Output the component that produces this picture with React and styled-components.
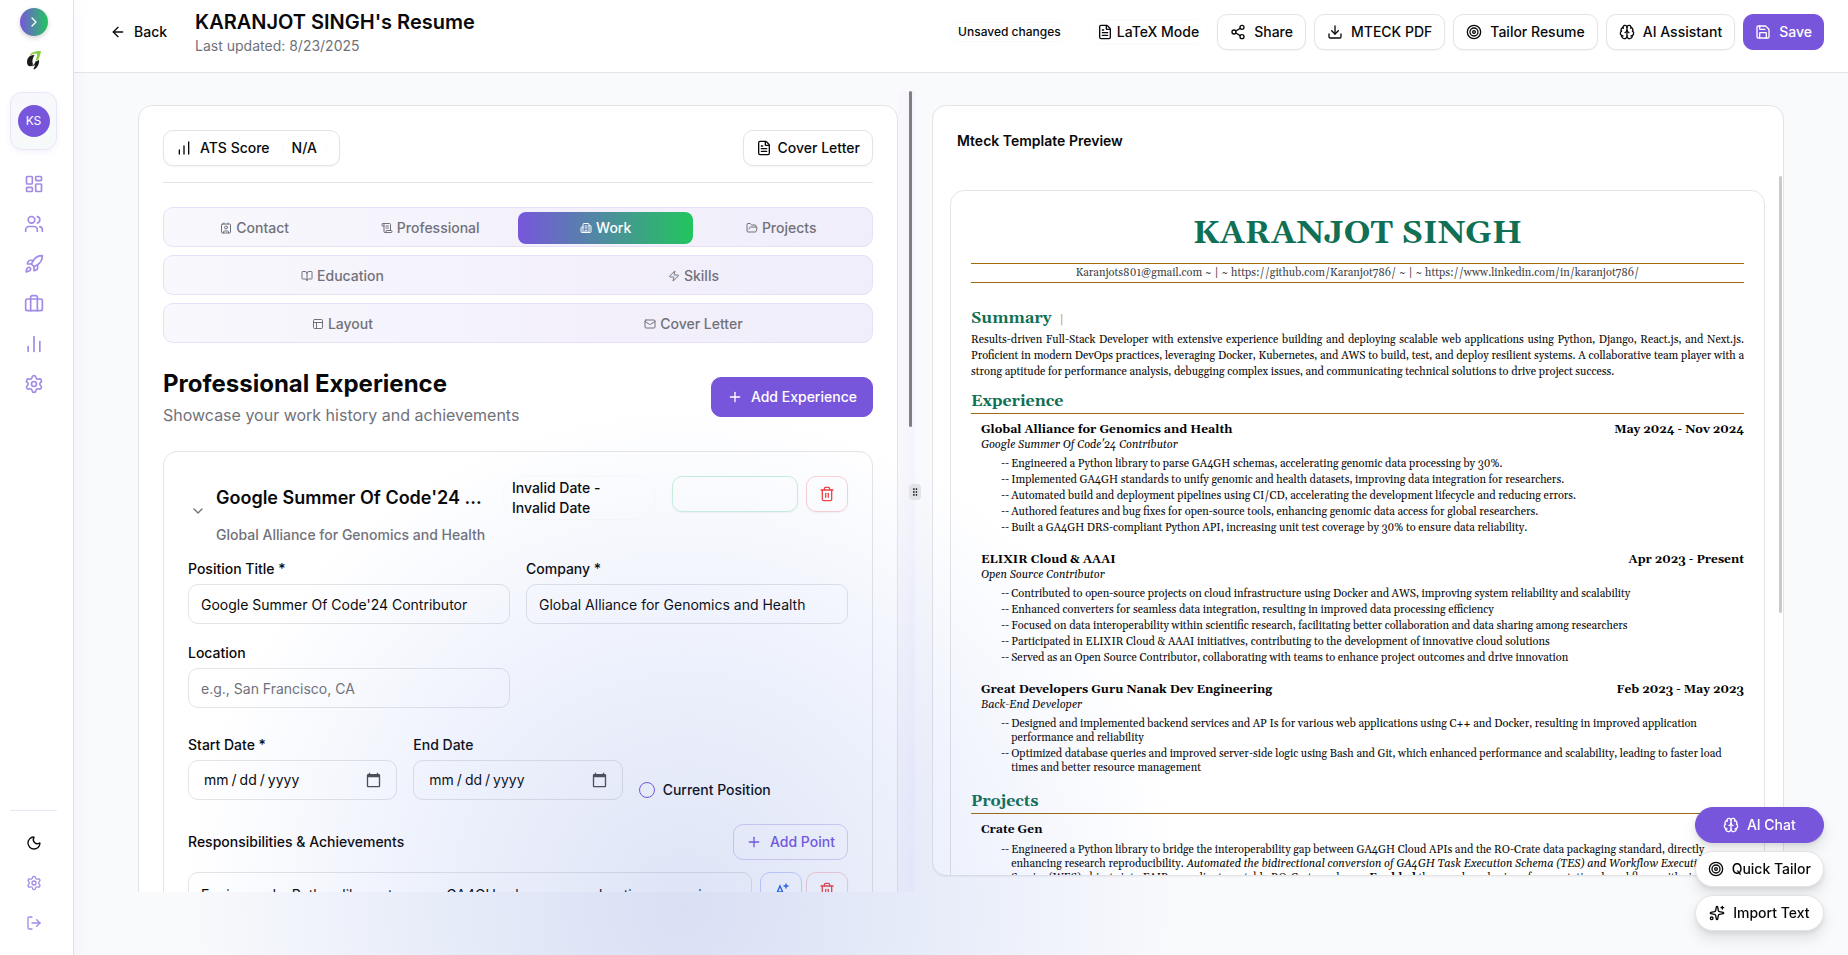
import React from "react";
import styled, { createGlobalStyle, css } from "styled-components";
import {
  ArrowLeft, BookOpen, Brain, Briefcase, Building2, ChartNoAxesColumn,
  ChartNoAxesColumnIncreasing, ChevronDown, ChevronRight, Contact, Download,
  FileText, FolderOpen, GripVertical, LayoutDashboard, LogOut, Mail, Moon,
  PanelsTopLeft, Plus, Rocket, Save, ScrollText, Settings, Share2, Sparkles,
  Target, Trash2, Users, Zap,
} from "lucide-react";

const c = {
  ink: "#09090b",
  muted: "#71717a",
  line: "#e4e4e7",
  purple: "#7856db",
  green: "#22c55e",
  page: "#f9fafc",
  forest: "#0f7055",
  gold: "#9f6b0c",
};

const GlobalStyle = createGlobalStyle`
  *, *::before, *::after { box-sizing: border-box; }
  body {
    margin: 0;
    background: ${c.page};
    color: ${c.ink};
    font: 500 14px/20px Inter, "Liberation Sans", sans-serif;
  }
  button, input, textarea { font: inherit; color: inherit; margin: 0; }
  button { cursor: pointer; }
  h1, h2, h3, h4, p, ul { margin: 0; padding: 0; }
  ul { list-style: none; }
  svg { flex: none; display: block; }
`;

const Shell = styled.div`
  position: relative;
  display: flex;
  height: 100vh;
  overflow: hidden;
`;

const Glow = styled.div`
  position: absolute;
  inset: 0;
  z-index: 2;
  pointer-events: none;
  background: radial-gradient(circle 500px at 37% 95%, rgba(60, 95, 205, 0.17), rgba(75, 115, 225, 0.1) 50%, rgba(99, 120, 241, 0) 100%);
`;

/* Sidebar */
const Sidebar = styled.aside`
  position: relative;
  z-index: 3;
  display: flex;
  flex-direction: column;
  align-items: center;
  flex: none;
  width: 74px;
  padding: 8px 16px 12px 10px;
  background: #fff;
  border-right: 1px solid #e0dcf3;
  box-shadow: 4px 0 16px rgba(120, 86, 219, 0.04);
`;

const ExpandButton = styled.button`
  display: grid;
  place-items: center;
  width: 28px;
  height: 28px;
  padding: 0;
  border: 0;
  border-radius: 50%;
  color: #fff;
  background: linear-gradient(90deg, ${c.purple}, ${c.green});
  box-shadow: 0 2px 5px rgba(0, 0, 0, 0.18);
`;

const LogoLink = styled.a`
  display: grid;
  place-items: center;
  width: 32px;
  height: 32px;
  margin: 8px 0 16px;
`;

const ProfileCard = styled.div`
  display: grid;
  place-items: center;
  width: 100%;
  height: 58px;
  border: 1px solid #e9e6f8;
  border-radius: 12px;
  background: linear-gradient(135deg, #f8f6fd, #f5fbf8);
  box-shadow: 0 2px 6px rgba(120, 86, 219, 0.08);
`;

const Avatar = styled.span`
  display: grid;
  place-items: center;
  width: 32px;
  height: 32px;
  border-radius: 50%;
  background: ${c.purple};
  color: #fff;
  font-weight: 400;
  font-size: 12px;
`;

const SideNav = styled.nav`
  display: flex;
  flex-direction: column;
  margin-top: 14px;
`;

const SideFooter = styled.div`
  display: flex;
  flex-direction: column;
  align-items: center;
  width: 100%;
  margin-top: auto;
  padding-top: 12px;
  border-top: 1px solid #e9e6f8;
`;

const sideIcon = css`
  display: grid;
  place-items: center;
  width: 40px;
  height: 40px;
  padding: 0;
  border: 0;
  background: none;
  color: ${(p) => (p.$dark ? c.ink : "#a18be6")};
`;
const SideLink = styled.a`${sideIcon}`;
const SideButton = styled.button`${sideIcon}`;

/* Header */
const Page = styled.div`
  flex: 1;
  min-width: 0;
  display: flex;
  flex-direction: column;
`;

const Header = styled.header`
  display: flex;
  align-items: center;
  gap: 16px;
  padding: 8px 24px 16px;
  background: #fff;
  border-bottom: 1px solid ${c.line};
`;

const HeaderTitle = styled.div`
  flex: 1;
  h1 { font-size: 20px; line-height: 28px; font-weight: 600; }
  p { color: ${c.muted}; font-weight: 400; }
`;

const Actions = styled.div`
  display: flex;
  align-items: center;
  gap: 8px;
`;

const tones = {
  outline: css`background: #fff; border-color: ${c.line}; padding: 0 12px; box-shadow: 0 1px 2px rgba(0, 0, 0, 0.05);`,
  solid: css`background: ${c.purple}; border-color: ${c.purple}; color: #fff;`,
  ghost: css`background: none; border-color: transparent;`,
  violet: css`background: none; border-color: #d9d2f5; color: ${c.purple};`,
  danger: css`background: none; border-color: #fbd0d4; color: #ef4444; box-shadow: 0 1px 2px rgba(0, 0, 0, 0.05);`,
  success: css`background: none; border-color: #c9f0db; box-shadow: 0 1px 2px rgba(0, 0, 0, 0.05);`,
  info: css`background: none; border-color: #c7d2fe; color: #2563eb;`,
};

const Button = styled.button`
  display: inline-flex;
  align-items: center;
  justify-content: center;
  gap: ${(p) => (p.$snug ? "6px" : "8px")};
  height: ${(p) => (p.$tall ? "40px" : "36px")};
  width: ${(p) => p.$width || "auto"};
  padding: 0 ${(p) => (p.$tall ? "15px" : "11px")};
  border: 1px solid;
  border-radius: 10px;
  white-space: nowrap;
  ${(p) => tones[p.$tone || "outline"]}
`;

const Badge = styled.span`
  display: inline-flex;
  align-items: center;
  gap: 4px;
  padding: 1px 9px;
  border: 1px solid rgba(0, 0, 0, 0.02);
  border-radius: 22px;
  font-size: ${(p) => (p.$small ? "12px" : "14px")};
  line-height: ${(p) => (p.$small ? "16px" : "20px")};
  margin-right: ${(p) => (p.$small ? "8px" : "0")};
  margin-left: ${(p) => (p.$inset ? "4px" : "0")};
`;

/* Workspace */
const Workspace = styled.main`
  display: grid;
  grid-template-columns: minmax(0, 33fr) 34px minmax(0, 37fr);
  height: calc(100vh - 136px);
  padding: 18px 64px 0;
  margin-bottom: 63px;
`;

const Pane = styled.section`
  overflow: hidden;
  padding-top: 14px;
`;

const EditorCard = styled.div`
  padding: 24px;
  background: #fff;
  border: 1px solid ${c.line};
  border-radius: 14px;
`;

const Toolbar = styled.div`
  display: flex;
  justify-content: space-between;
  padding-bottom: 16px;
  border-bottom: 1px solid ${c.line};
`;

const Tabs = styled.div`
  display: flex;
  flex-direction: column;
  gap: 8px;
  margin: 24px 0;
`;

const TabRow = styled.div`
  display: grid;
  grid-auto-flow: column;
  grid-auto-columns: minmax(0, 1fr);
  height: 40px;
  padding: 4px 3px 2px;
  border: 1px solid #e6e1f8;
  border-radius: 10px;
  background: linear-gradient(90deg, #f8f8fd, #f3f0fb 60%, #f0eefa);
`;

const Tab = styled.button`
  display: flex;
  align-items: center;
  justify-content: center;
  gap: 4px;
  border: 0;
  border-radius: 8px;
  color: ${(p) => (p.$active ? "#fff" : c.muted)};
  background: ${(p) => (p.$active ? `linear-gradient(90deg, ${c.purple}, ${c.green})` : "none")};
`;

const SectionHead = styled.div`
  display: flex;
  align-items: center;
  justify-content: space-between;
  margin-bottom: 24px;
  h2 { font-size: 24px; line-height: 34px; font-weight: 700; margin-bottom: 2px; }
  p { font-size: 16px; line-height: 24px; font-weight: 400; color: ${c.muted}; }
`;

const JobCard = styled.article`
  padding: 24px;
  border: 1px solid ${c.line};
  border-radius: 14px;
`;

const JobHead = styled.div`
  display: flex;
  align-items: flex-start;
  gap: 16px;
  margin-bottom: 16px;
`;

const JobSummary = styled.div`
  flex: 1;
  min-width: 0;
  display: flex;
  align-items: center;
  gap: 8px;
`;

const Toggle = styled.button`
  display: grid;
  place-items: center;
  width: 20px;
  height: 20px;
  padding: 0;
  border: 0;
  background: none;
  color: ${c.muted};
`;

const JobText = styled.div`
  flex: 1;
  min-width: 0;
  p { margin-top: 4px; line-height: 22px; color: ${c.muted}; }
`;

const JobTitle = styled.div`
  display: flex;
  align-items: center;
  gap: 16px;
  h3 {
    flex: 1;
    min-width: 0;
    font-size: 18px;
    line-height: 28px;
    font-weight: 600;
    overflow: hidden;
    white-space: nowrap;
    text-overflow: ellipsis;
  }
`;

const DateBadge = styled.span`
  flex: 0 0 154px;
  padding: 1px 40px 1px 9px;
  border: 1px solid rgba(0, 0, 0, 0.02);
  border-radius: 22px;
`;

const Fields = styled.div`
  display: grid;
  grid-template-columns: repeat(${(p) => p.$cols}, minmax(0, 1fr));
  gap: 22px 16px;
  margin-bottom: ${(p) => p.$after};
`;

const Field = styled.div`
  display: flex;
  flex-direction: column;
  gap: 8px;
  label { line-height: 14px; }
`;

const Input = styled.input`
  width: 100%;
  height: 40px;
  padding: 0 12px;
  border: 1px solid ${c.line};
  border-radius: 10px;
  background: none;
  font-weight: 400;
  &::placeholder { color: ${c.muted}; }
  &::-webkit-datetime-edit-month-field,
  &::-webkit-datetime-edit-day-field,
  &::-webkit-datetime-edit-year-field { padding: 0 3px; }
  &::-webkit-calendar-picker-indicator { width: 17px; height: 17px; opacity: 0.7; }
`;

const RadioField = styled.label`
  display: flex;
  align-items: center;
  align-self: end;
  gap: 8px;
  height: 20px;
`;

const Radio = styled.input`
  appearance: none;
  width: 16px;
  height: 16px;
  border: 1px solid ${c.purple};
  border-radius: 50%;
`;

const PointsHead = styled.div`
  display: flex;
  align-items: center;
  justify-content: space-between;
  margin-bottom: 12px;
`;

const PointRow = styled.div`
  display: flex;
  gap: 4px;
`;

const PointText = styled.textarea`
  flex: 1;
  min-width: 0;
  height: 80px;
  margin-right: 4px;
  padding: 12px;
  border: 1px solid ${c.line};
  border-radius: 10px;
  background: none;
  font-weight: 400;
  resize: none;
`;

/* Divider between panes */
const Gutter = styled.div`
  display: flex;
  align-items: center;
  justify-content: center;
  position: relative;
  background: linear-gradient(90deg, rgba(168, 85, 247, 0.01), rgba(168, 85, 247, 0.04) 50%, transparent 50%);
`;

const PaneScroll = styled.span`
  position: absolute;
  top: 0;
  left: 11px;
  width: 3px;
  height: 42%;
  border-radius: 2px;
  background: #7f7e83;
`;

const Handle = styled.button`
  display: grid;
  place-items: center;
  width: 12px;
  height: 16px;
  padding: 0;
  border: 0;
  border-radius: 4px;
  background: ${c.line};
`;

/* Preview */
const PreviewCard = styled.div`
  position: relative;
  height: calc(100% - 16px);
  overflow: hidden;
  background: #fff;
  border: 1px solid ${c.line};
  border-radius: 14px;
  box-shadow: 0 1px 2px rgba(0, 0, 0, 0.05);
`;

const PreviewTitle = styled.h2`
  padding: 25px 24px;
  font-size: 14px;
  line-height: 20px;
  font-weight: 600;
`;

const PreviewScroll = styled.span`
  position: absolute;
  top: 70px;
  right: 1px;
  width: 3px;
  height: 437px;
  border-radius: 2px;
  background: #c9c9c9;
`;

const Paper = styled.article`
  margin: 14px 18px 0 17px;
  padding: 22px 20px 200px;
  border: 1px solid ${c.line};
  border-radius: 14px;
  color: ${c.ink};
  font: 400 11px/14px Georgia, Gelasio, "Liberation Serif", serif;
  font-variant-numeric: oldstyle-nums;
`;

const PaperName = styled.h2`
  margin-bottom: 10px;
  text-align: center;
  font-size: 33px;
  line-height: 40px;
  font-weight: 700;
  color: ${c.forest};
`;

const ContactLine = styled.p`
  padding: 1px 0;
  border: solid ${c.gold};
  border-width: 1px 0;
  text-align: center;
  line-height: 16px;
  color: #3f3f46;
`;

const PaperHeading = styled.h3`
  font-size: 16px;
  line-height: 20px;
  margin-top: ${(p) => p.$top};
  padding-bottom: 2px;
  border-bottom: ${(p) => (p.$rule ? `1px solid ${c.gold}` : "0")};
  color: ${c.forest};
  span { margin-left: 4px; font-size: 12px; font-weight: 400; color: #d9962e; }
`;

const Summary = styled.p`
  line-height: 16px;
  text-align: justify;
`;

const Entry = styled.section`
  padding-left: 10px;
  margin-top: ${(p) => p.$top};
`;

const EntryHead = styled.h4`
  display: flex;
  justify-content: space-between;
  font-size: 12px;
  line-height: 16px;
  color: #000;
`;

const Role = styled.p`
  font-style: italic;
`;

const Bullets = styled.ul`
  display: flex;
  flex-direction: column;
  gap: 2px;
  margin-top: 5px;
  padding-left: 20px;
`;

const Bullet = styled.li`
  display: flex;
  gap: 2px;
  &::before { content: "--"; flex: none; }
`;

/* Floating actions */
const Floating = styled.div`
  position: fixed;
  z-index: 4;
  right: 24px;
  bottom: 24px;
  display: flex;
  flex-direction: column;
  gap: 8px;
  button {
    padding: 0 12px;
    border-radius: 18px;
    box-shadow: 0 8px 14px rgba(0, 0, 0, 0.1), 0 2px 5px rgba(0, 0, 0, 0.08);
  }
`;

const navItems = [
  ["Dashboard", LayoutDashboard], ["People", Users], ["Launch", Rocket],
  ["Jobs", Briefcase], ["Analytics", ChartNoAxesColumn], ["Settings", Settings],
];

const tabRows = [
  [["Contact", Contact], ["Professional", ScrollText], ["Work", Building2], ["Projects", FolderOpen]],
  [["Education", BookOpen], ["Skills", Zap]],
  [["Layout", PanelsTopLeft], ["Cover Letter", Mail]],
];

const jobs = [
  {
    name: "Global Alliance for Genomics and Health",
    dates: "May 2024 - Nov 2024",
    role: "Google Summer Of Code'24 Contributor",
    points: [
      "Engineered a Python library to parse GA4GH schemas, accelerating genomic data processing by 30%.",
      "Implemented GA4GH standards to unify genomic and health datasets, improving data integration for researchers.",
      "Automated build and deployment pipelines using CI/CD, accelerating the development lifecycle and reducing errors.",
      "Authored features and bug fixes for open-source tools, enhancing genomic data access for global researchers.",
      "Built a GA4GH DRS-compliant Python API, increasing unit test coverage by 30% to ensure data reliability.",
    ],
  },
  {
    name: "ELIXIR Cloud & AAAI",
    dates: "Apr 2023 - Present",
    role: "Open Source Contributor",
    points: [
      "Contributed to open-source projects on cloud infrastructure using Docker and AWS, improving system reliability and scalability",
      "Enhanced converters for seamless data integration, resulting in improved data processing efficiency",
      "Focused on data interoperability within scientific research, facilitating better collaboration and data sharing among researchers",
      "Participated in ELIXIR Cloud & AAAI initiatives, contributing to the development of innovative cloud solutions",
      "Served as an Open Source Contributor, collaborating with teams to enhance project outcomes and drive innovation",
    ],
  },
  {
    name: "Great Developers Guru Nanak Dev Engineering",
    dates: "Feb 2023 - May 2023",
    role: "Back-End Developer",
    points: [
      "Designed and implemented backend services and AP Is for various web applications using C++ and Docker, resulting in improved application performance and reliability",
      "Optimized database queries and improved server-side logic using Bash and Git, which enhanced performance and scalability, leading to faster load times and better resource management",
    ],
  },
];

function Logo() {
  return (
    <svg width="16" height="20" viewBox="0 0 16 20" aria-hidden="true">
      <path d="M3.500 5.500C5 2.500 8.500 1 15 1C14.500 4 13.500 7 12.500 9.500L9.500 10.500C11 7 11.500 5 11 3.800C9 3.500 6 4 3.500 5.500Z" fill="#86cf3c" />
      <path d="M5 5.500C2.500 6.500 1 9 1 12C1 15.500 3 17 5.500 16C6.800 15.500 7.300 14.500 6.500 12.500C6 10.500 7 7.500 8.500 5C7.500 4.700 6 5 5 5.500Z" fill="#1b1b1b" />
      <path d="M9.500 11.500L13 10C13.500 13.500 12 17.500 8 19.500L7.500 18.500C8.500 17 9 16 9 14.500C8 16 6.500 16.500 5.500 16C7.500 15 8.800 13.500 9.500 11.500Z" fill="#1b1b1b" />
    </svg>
  );
}

function LetterSparkIcon() {
  return (
    <svg width="16" height="16" viewBox="0 0 16 16" fill="none" stroke="currentColor" strokeWidth="1.400" strokeLinecap="round" aria-hidden="true">
      <path d="M3 13L7 4L11 13M4.500 10H9.500M13 2V6M11 4H15" />
    </svg>
  );
}

function SidebarPanel() {
  return (
    <Sidebar>
      <ExpandButton aria-label="Expand sidebar"><ChevronRight size={16} /></ExpandButton>
      <LogoLink href="#" aria-label="Home"><Logo /></LogoLink>
      <ProfileCard><Avatar>KS</Avatar></ProfileCard>
      <SideNav>
        {navItems.map(([label, Icon]) => (
          <SideLink href="#" key={label} aria-label={label}><Icon size={20} /></SideLink>
        ))}
      </SideNav>
      <SideFooter>
        <SideButton $dark aria-label="Dark mode"><Moon size={16} /></SideButton>
        <SideButton aria-label="Preferences"><Settings size={16} /></SideButton>
        <SideButton aria-label="Log out"><LogOut size={16} /></SideButton>
      </SideFooter>
    </Sidebar>
  );
}

function PageHeader() {
  return (
    <Header>
      <Button $tone="ghost"><ArrowLeft size={16} />Back</Button>
      <HeaderTitle>
        <h1>KARANJOT SINGH's Resume</h1>
        <p>Last updated: 8/23/2025</p>
      </HeaderTitle>
      <Actions>
        <Badge $small>Unsaved changes</Badge>
        <Badge><FileText size={16} />LaTeX Mode</Badge>
        <Button><Share2 size={16} />Share</Button>
        <Button><Download size={16} />MTECK PDF</Button>
        <Button><Target size={16} />Tailor Resume</Button>
        <Button><Brain size={16} />AI Assistant</Button>
        <Button $tone="solid"><Save size={16} />Save</Button>
      </Actions>
    </Header>
  );
}

function JobEditor() {
  return (
    <JobCard>
      <JobHead>
        <JobSummary>
          <Toggle aria-label="Collapse"><ChevronDown size={16} /></Toggle>
          <JobText>
            <JobTitle>
              <h3>Google Summer Of Code'24 Contributor</h3>
              <DateBadge>Invalid Date - Invalid Date</DateBadge>
            </JobTitle>
            <p>Global Alliance for Genomics and Health</p>
          </JobText>
        </JobSummary>
        <Actions>
          <Button $tone="success" $width="126px" aria-label="Improve" />
          <Button $tone="danger" $width="42px" aria-label="Delete experience"><Trash2 size={16} /></Button>
        </Actions>
      </JobHead>
      <Fields $cols={2} $after="30px">
        <Field>
          <label htmlFor="position">Position Title *</label>
          <Input id="position" defaultValue="Google Summer Of Code'24 Contributor" />
        </Field>
        <Field>
          <label htmlFor="company">Company *</label>
          <Input id="company" defaultValue="Global Alliance for Genomics and Health" />
        </Field>
        <Field>
          <label htmlFor="location">Location</label>
          <Input id="location" placeholder="e.g., San Francisco, CA" />
        </Field>
      </Fields>
      <Fields $cols={3} $after="24px">
        <Field>
          <label htmlFor="start">Start Date *</label>
          <Input id="start" type="date" />
        </Field>
        <Field>
          <label htmlFor="end">End Date</label>
          <Input id="end" type="date" />
        </Field>
        <RadioField><Radio type="radio" name="current" />Current Position</RadioField>
      </Fields>
      <PointsHead>
        <label htmlFor="point">Responsibilities & Achievements</label>
        <Button $tone="violet" $width="115px"><Plus size={16} />Add Point</Button>
      </PointsHead>
      <PointRow>
        <PointText id="point" defaultValue={jobs[0].points[0]} />
        <Button $tone="info" $width="42px" aria-label="Rewrite point"><LetterSparkIcon /></Button>
        <Button $tone="danger" $width="42px" aria-label="Delete point"><Trash2 size={16} /></Button>
      </PointRow>
    </JobCard>
  );
}

function Editor() {
  return (
    <EditorCard>
      <Toolbar>
        <Button><ChartNoAxesColumnIncreasing size={16} />ATS Score<Badge $inset>N/A</Badge></Button>
        <Button $snug><FileText size={16} />Cover Letter</Button>
      </Toolbar>
      <Tabs>
        {tabRows.map((row) => (
          <TabRow key={row[0][0]}>
            {row.map(([label, Icon]) => (
              <Tab key={label} $active={label === "Work"}><Icon size={12} />{label}</Tab>
            ))}
          </TabRow>
        ))}
      </Tabs>
      <SectionHead>
        <div>
          <h2>Professional Experience</h2>
          <p>Showcase your work history and achievements</p>
        </div>
        <Button $tone="solid" $tall><Plus size={16} />Add Experience</Button>
      </SectionHead>
      <JobEditor />
    </EditorCard>
  );
}

function Preview() {
  return (
    <PreviewCard>
      <PreviewTitle>Mteck Template Preview</PreviewTitle>
      <Paper>
        <PaperName>KARANJOT SINGH</PaperName>
        <ContactLine>
          Karanjots801@gmail.com ~ | ~ https://github.com/Karanjot786/ ~ | ~ https://www.linkedin.com/in/karanjot786/
        </ContactLine>
        <PaperHeading $top="25px">Summary <span>|</span></PaperHeading>
        <Summary>
          Results-driven Full-Stack Developer with extensive experience building and deploying scalable web
          applications using Python, Django, React.js, and Next.js. Proficient in modern DevOps practices,
          leveraging Docker, Kubernetes, and AWS to build, test, and deploy resilient systems. A collaborative
          team player with a strong aptitude for performance analysis, debugging complex issues, and
          communicating technical solutions to drive project success.
        </Summary>
        <PaperHeading $rule $top="11px">Experience</PaperHeading>
        {jobs.map((job, i) => (
          <Entry key={job.name} $top={i === 0 ? "8px" : "17px"}>
            <EntryHead><span>{job.name}</span><span>{job.dates}</span></EntryHead>
            <Role>{job.role}</Role>
            <Bullets>
              {job.points.map((point) => <Bullet key={point}>{point}</Bullet>)}
            </Bullets>
          </Entry>
        ))}
        <PaperHeading $rule $top="16px">Projects</PaperHeading>
        <Entry $top="8px">
          <EntryHead>Crate Gen</EntryHead>
          <Bullets>
            <Bullet>
              <span>
                Engineered a Python library to bridge the interoperability gap between GA4GH Cloud APIs and the
                RO-Crate data packaging standard, directly enhancing research reproducibility.{" "}
                <em>Automated the bidirectional conversion of GA4GH Task Execution Schema (TES) and Workflow Execution</em>{" "}
                Service (WES) objects into FAIR-compliant, portable RO-Crate packages. <b>Enabled</b> the
                seamless sharing of computational workflows with rich metadata.
              </span>
            </Bullet>
          </Bullets>
        </Entry>
      </Paper>
      <PreviewScroll />
    </PreviewCard>
  );
}

export default function App() {
  return (
    <Shell>
      <GlobalStyle />
      <SidebarPanel />
      <Page>
        <PageHeader />
        <Workspace>
          <Pane><Editor /></Pane>
          <Gutter>
            <PaneScroll />
            <Handle aria-label="Resize panels"><GripVertical size={10} /></Handle>
          </Gutter>
          <Pane><Preview /></Pane>
        </Workspace>
      </Page>
      <Glow />
      <Floating>
        <Button $tone="solid"><Brain size={16} />AI Chat</Button>
        <Button><Target size={16} />Quick Tailor</Button>
        <Button><Sparkles size={16} />Import Text</Button>
      </Floating>
    </Shell>
  );
}
